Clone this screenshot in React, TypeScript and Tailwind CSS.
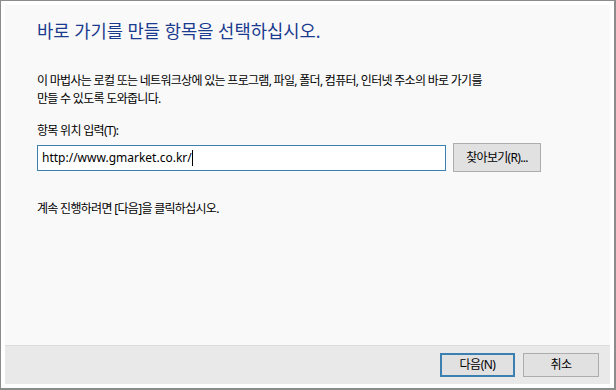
export default function App() {
  const font = { fontFamily: '"Noto Sans", "Noto Sans CJK KR", sans-serif' };
  return (
    <div
      style={font}
      className="w-[616px] h-[390px] bg-white border-l border-t border-r-2 border-b-2 border-[#8c8c8c] p-[4px] flex flex-col"
    >
      <div className="flex-1 flex flex-col bg-[#f9f9f9]">
        {/* content */}
        <div className="flex-1 pl-[32px] pt-[13px]">
          <h1 className="text-[17.7px] leading-[26px] text-[#1b3b8f]">
            바로 가기를 만들 항목을 선택하십시오.
          </h1>

          <p className="mt-[28px] text-[12px] leading-[18px] text-black tracking-[-0.7px]">
            이 마법사는 로컬 또는 네트워크상에 있는 프로그램, 파일, 폴더, 컴퓨터, 인터넷 주소의 바로 가기를
            <br />
            만들 수 있도록 도와줍니다.
          </p>

          <label className="block mt-[14px] text-[12px] leading-[18px] text-black tracking-[-0.7px]">
            항목 위치 입력(T):
          </label>

          <div className="mt-[3px] flex items-center gap-[7px]">
            <div className="w-[409px] h-[26px] border border-[#3c7fb1] bg-white flex items-center pl-[4px] text-[12px] text-black">
              <span>http://www.gmarket.co.kr/</span>
              <span className="w-px h-[16px] bg-black" />
            </div>
            <button className="w-[88px] h-[29px] border border-[#adadad] bg-[#e1e1e1] text-[12px] text-black tracking-[-0.7px]">
              찾아보기(R)...
            </button>
          </div>

          <p className="mt-[28px] text-[12px] leading-[18px] text-black tracking-[-0.7px]">
            계속 진행하려면 [다음]을 클릭하십시오.
          </p>
        </div>

        {/* footer */}
        <div className="h-[39px] border-t border-[#dcdcdc] bg-[#e9e9e9] flex items-center justify-end gap-[8px] pr-[11px]">
          <button className="w-[75px] h-[24px] border-2 border-[#3c7fb1] bg-[#e1e1e1] text-[12px] text-black tracking-[-0.5px]">
            다음(N)
          </button>
          <button className="w-[76px] h-[24px] border border-[#adadad] bg-[#e1e1e1] text-[12px] text-black tracking-[-0.5px]">
            취소
          </button>
        </div>
      </div>
    </div>
  );
}
